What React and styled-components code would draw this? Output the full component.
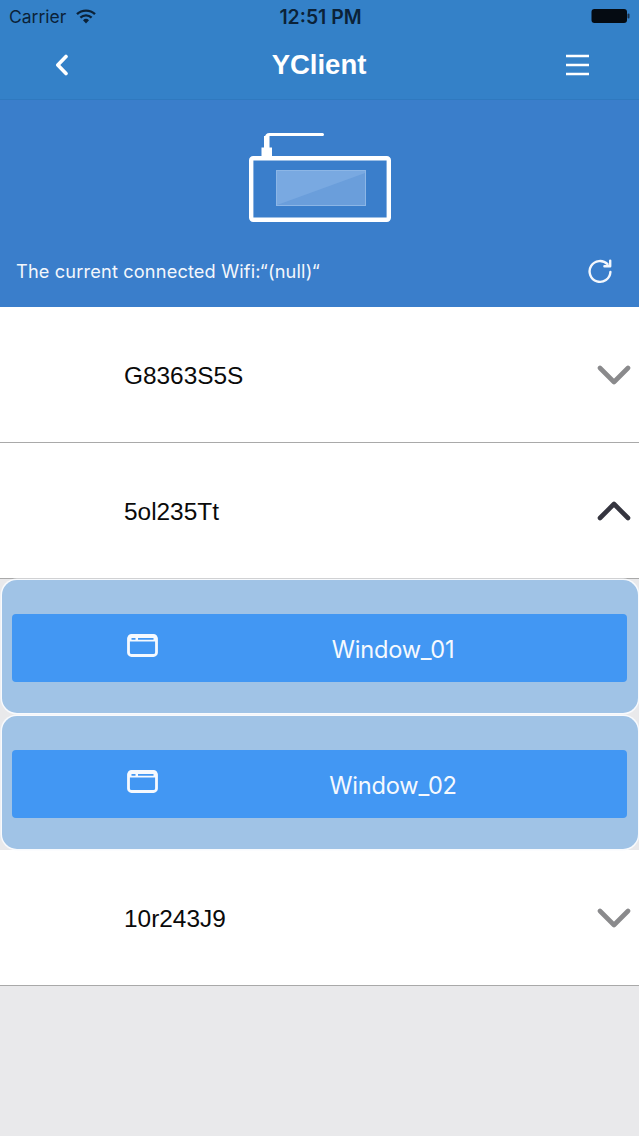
import React from "react";
import styled, { createGlobalStyle } from "styled-components";

const Global = createGlobalStyle`
  html, body { margin: 0; padding: 0; background: #e9e9eb; }
  * { box-sizing: border-box; }
  body { font-family: "Liberation Sans", Arial, sans-serif; }
`;

const Page = styled.div`
  width: 639px;
  height: 1136px;
  background: #e9e9eb;
  overflow: hidden;
`;

const TopBand = styled.header`
  background: #3481c8;
  height: 100px;
  border-bottom: 1px solid #2f79bf;
`;

const StatusBar = styled.div`
  height: 32px;
  position: relative;
  display: flex;
  align-items: center;
  justify-content: space-between;
  padding: 0 8px 0 9px;
  color: #0b2238;
  font-family: Inter, "Noto Sans", sans-serif;
`;

const Carrier = styled.div`
  display: flex;
  align-items: center;
  gap: 10px;
  font-size: 17.5px;
`;

const Clock = styled.div`
  position: absolute;
  left: 2px;
  right: 0;
  top: 5px;
  text-align: center;
  font-size: 19.4px;
  font-weight: 600;
`;

const NavBar = styled.div`
  height: 67px;
  display: flex;
  align-items: center;
  justify-content: space-between;
  padding: 0 50px 2px 55px;
`;

const Title = styled.h1`
  margin: 0 0 0 4px;
  color: #fff;
  font-size: 27.5px;
  font-weight: 700;
`;

const Hero = styled.section`
  height: 207px;
  background: #3a7ecb;
  display: flex;
  flex-direction: column;
  align-items: center;
  padding-top: 32px;
`;

const WifiRow = styled.div`
  align-self: stretch;
  margin-top: 36px;
  display: flex;
  align-items: center;
  justify-content: space-between;
  padding: 0 26px 0 16px;
  color: #f3f7fc;
  font-family: Inter, "Noto Sans", sans-serif;
  font-size: 18.2px;
  letter-spacing: 0.15px;
`;

const Row = styled.div`
  height: 136px;
  background: #fff;
  border-bottom: 1px solid #a9a9a9;
  display: flex;
  align-items: center;
  justify-content: space-between;
  padding: 0 8px 0 124px;
`;

const RowLabel = styled.span`
  margin-top: 2px;
  font-size: 24.4px;
  color: #0a0a0a;
`;

const CardList = styled.div`
  display: flex;
  flex-direction: column;
  gap: 3px;
  padding: 1px 0;
`;

const Card = styled.div`
  height: 133px;
  margin: 0 1px 0 2px;
  box-shadow: 0 0 0 1.5px #f8fafd;
  border-radius: 15px;
  background: #a0c3e6;
  padding: 34px 11px 31px 10px;
`;

const WindowButton = styled.div`
  height: 68px;
  background: #4297f3;
  border-radius: 4px;
  display: flex;
  align-items: center;
  padding-left: 115px;
  color: #f5f9fe;
`;

const WindowIconBox = styled.span`
  display: flex;
  margin-bottom: 5px;
`;

const WindowLabel = styled.span`
  flex: 1;
  margin-top: 2px;
  text-align: center;
  font-family: Inter, "Noto Sans", sans-serif;
  font-size: 23.6px;
  letter-spacing: -0.2px;
`;

const WifiGlyph = () => (
  <svg width="20" height="15" viewBox="0 0 20 15" fill="none" stroke="#0b2238" strokeWidth="2.4" strokeLinecap="butt">
    <path d="M1 5.2a13 13 0 0 1 18 0" />
    <path d="M4.4 8.6a8.2 8.2 0 0 1 11.2 0" />
    <path d="M10 14.6l-3-3.3a4.3 4.3 0 0 1 6 0z" fill="#0b2238" stroke="none" />
  </svg>
);

const Battery = () => (
  <svg width="40" height="16" viewBox="0 0 40 16">
    <rect x="0.5" y="1" width="35.5" height="14" rx="3" fill="#050b12" />
    <rect x="36.5" y="5.5" width="2" height="5" rx="1" fill="#1a3048" />
  </svg>
);

const BackIcon = () => (
  <svg width="14" height="22" viewBox="0 0 14 22" fill="none" stroke="#fff" strokeWidth="3.6" strokeLinecap="round" strokeLinejoin="round">
    <path d="M11 2.5L2.8 11l8.2 8.5" />
  </svg>
);

const MenuIcon = () => (
  <svg width="24" height="22" viewBox="0 0 24 22" fill="none" stroke="#fff" strokeWidth="2.4">
    <path d="M1 2h23M1 11h23M1 20h23" />
  </svg>
);

const Router = () => (
  <svg width="142" height="90" viewBox="0 0 142 90">
    <path d="M17.5 20V5.5q0-3 3-3H73.5" fill="none" stroke="#fff" strokeWidth="3" strokeLinecap="round" />
    <rect x="15" y="4" width="5.5" height="14" fill="#fff" />
    <rect x="12.5" y="15.5" width="10.5" height="10" fill="#fff" />
    <rect x="2.2" y="26.2" width="137.6" height="61.6" rx="2" fill="none" stroke="#fff" strokeWidth="4.4" strokeLinejoin="round" />
    <rect x="27.5" y="38.5" width="89" height="35" fill="#79a9e1" stroke="#8cb6e6" strokeWidth="1" />
    <path d="M28 73L116 41v32z" fill="#6a9edb" />
  </svg>
);

const RefreshIcon = () => (
  <svg width="26" height="26" viewBox="0 0 26 26" fill="none" stroke="#f3f7fc" strokeWidth="2.4" strokeLinecap="round" strokeLinejoin="round">
    <path d="M20.5 6.2A10.4 10.4 0 1 0 23.4 14" />
    <path d="M23.2 2.6v5.6h-5.8" />
  </svg>
);

const Chevron = ({ up }) => (
  <svg width="34" height="20" viewBox="0 0 34 20" fill="none" stroke={up ? "#35353f" : "#8a8a8c"} strokeWidth="4.6" strokeLinecap="round" strokeLinejoin="round">
    <path d={up ? "M3 17L17 3l14 14" : "M3 3l14 14L31 3"} />
  </svg>
);

const WindowIcon = () => (
  <svg width="32" height="23" viewBox="0 0 32 23" fill="none">
    <rect x="1.5" y="1.5" width="28" height="20" rx="3" stroke="#f5f9fe" strokeWidth="2.8" />
    <path d="M1.5 4.5h28" stroke="#f5f9fe" strokeWidth="6" />
    <path d="M4.5 4.8h4M11 4.8h15.5" stroke="#4297f3" strokeWidth="1.8" />
  </svg>
);

const devices = { first: "G8363S5S", second: "5ol235Tt", third: "10r243J9" };
const windows = ["Window_01", "Window_02"];

export default function App() {
  return (
    <Page>
      <Global />
      <TopBand>
        <StatusBar>
          <Carrier>
            Carrier
            <WifiGlyph />
          </Carrier>
          <Clock>12:51 PM</Clock>
          <Battery />
        </StatusBar>
        <NavBar>
          <BackIcon />
          <Title>YClient</Title>
          <MenuIcon />
        </NavBar>
      </TopBand>
      <Hero>
        <Router />
        <WifiRow>
          <span>The current connected Wifi:“(null)“</span>
          <RefreshIcon />
        </WifiRow>
      </Hero>
      <Row>
        <RowLabel>{devices.first}</RowLabel>
        <Chevron />
      </Row>
      <Row>
        <RowLabel>{devices.second}</RowLabel>
        <Chevron up />
      </Row>
      <CardList>
        {windows.map((name) => (
          <Card key={name}>
            <WindowButton>
              <WindowIconBox>
                <WindowIcon />
              </WindowIconBox>
              <WindowLabel>{name}</WindowLabel>
            </WindowButton>
          </Card>
        ))}
      </CardList>
      <Row>
        <RowLabel>{devices.third}</RowLabel>
        <Chevron />
      </Row>
    </Page>
  );
}
